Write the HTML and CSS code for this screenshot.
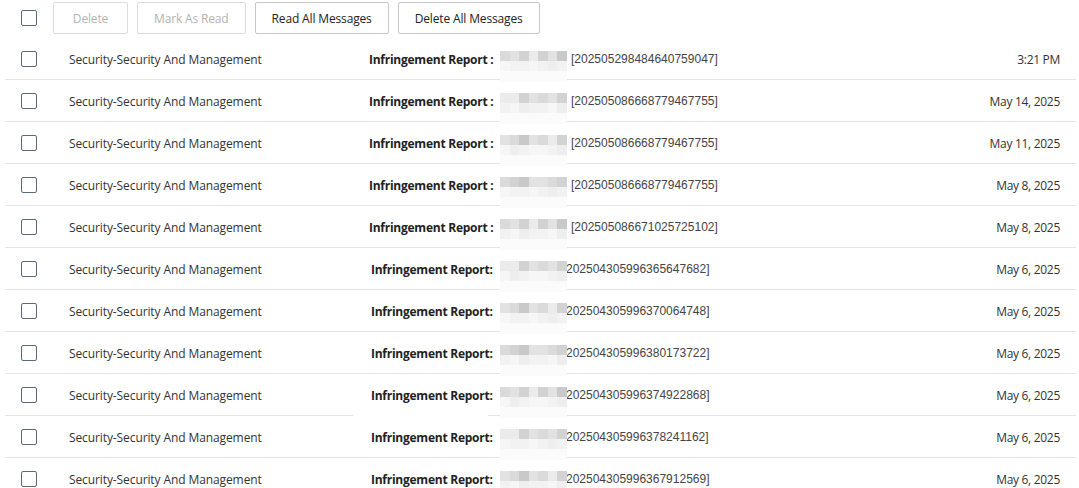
FILE: index.html
```html
<!DOCTYPE html>
<html>
<head>
<meta charset="utf-8">
<link rel="stylesheet" href="styles.css">
</head>
<body>
<div class="page">
  <div class="toolbar">
    <span class="cb"></span>
    <button class="btn disabled">Delete</button>
    <button class="btn disabled">Mark As Read</button>
    <button class="btn">Read All Messages</button>
    <button class="btn">Delete All Messages</button>
  </div>
  <div class="list" id="list"></div>
</div>
<script src="app.js"></script>
</body>
</html>
```
FILE: styles.css
```css
* { box-sizing: border-box; }
body {
  margin: 0;
  background: #fff;
  font-family: "Open Sans", "Noto Sans", sans-serif;
  color: #333;
}
.page { padding: 0 3px 0 5px; }
.toolbar {
  display: flex;
  align-items: center;
  gap: 9px;
  height: 38px;
  padding-left: 16px;
  padding-bottom: 2px;
}
.cb {
  display: inline-block;
  width: 16px;
  height: 16px;
  border: 1.5px solid #5b6b7c;
  border-radius: 2px;
  flex: none;
}
.toolbar .cb { margin-right: 7px; }
.btn {
  height: 32px;
  min-width: 75px;
  padding: 0 16px;
  background: #fff;
  border: 1px solid #c9c9c9;
  border-radius: 2px;
  font-family: inherit;
  font-size: 12px;
  letter-spacing: -0.15px;
  color: #222;
}
.btn.disabled { color: #b3b3b3; border-color: #dcdcdc; }
.row {
  position: relative;
  display: flex;
  align-items: center;
  height: 42px;
  border-bottom: 1px solid #e4e4e4;
  padding: 1px 16px 0 16px;
}
.row .cb { margin-right: 32px; }
.title {
  width: 300px;
  font-size: 12px;
  letter-spacing: -0.1px;
  color: #333;
}
.label {
  width: 131px;
  font-size: 12px;
  font-weight: 700;
  letter-spacing: -0.25px;
  color: #222;
}
.row.alt .label { padding-left: 2px; }
.blur {
  position: relative;
  width: 71px;
  height: 16px;
  flex: none;
}
.pix {
  position: absolute;
  left: 0;
  top: 0;
  width: 67px;
  display: grid;
  grid-template-columns: repeat(7, 1fr);
  grid-template-rows: 10px 10px 11px;
}
.num {
  font-family: "Liberation Sans", Arial, sans-serif;
  font-size: 12px;
  color: #444;
}
.row.alt .blur { width: 66px; }
.date {
  margin-left: auto;
  font-size: 12px;
  letter-spacing: -0.3px;
  color: #333;
}
.mask {
  position: absolute;
  left: 348px;
  bottom: -1px;
  width: 135px;
  height: 2px;
  background: #fff;
}
.g1 { background: #c9c9c9; }
.g2 { background: #d2d2d2; }
.g3 { background: #dadada; }
.g4 { background: #e2e2e2; }
.g5 { background: #ebebeb; }
.l1 { background: #eeeeee; }
.l2 { background: #f2f2f2; }
.l3 { background: #f6f6f6; }
.w1 { background: #fbfbfb; }
```
FILE: app.js
```js
const rows = [
  ["3:21 PM", "[202505298484640759047]", false],
  ["May 14, 2025", "[202505086668779467755]", false],
  ["May 11, 2025", "[202505086668779467755]", false],
  ["May 8, 2025", "[202505086668779467755]", false],
  ["May 8, 2025", "[202505086671025725102]", false],
  ["May 6, 2025", "202504305996365647682]", true],
  ["May 6, 2025", "202504305996370064748]", true],
  ["May 6, 2025", "202504305996380173722]", true],
  ["May 6, 2025", "202504305996374922868]", true],
  ["May 6, 2025", "202504305996378241162]", true],
  ["May 6, 2025", "202504305996367912569]", true]
];
const tops = [
  ["g3","g4","g2","g5","g2","g4","g1"],
  ["g5","g5","g2","g4","g3","g4","g2"],
  ["g4","g3","g1","g4","g3","g5","g2"],
  ["g3","g2","g1","g4","g4","g3","g2"]
];
const mids = [
  ["l3","l2","l2","l3","l2","l1","l2"],
  ["l2","l3","l1","l2","l2","l3","l1"],
  ["l3","l1","l2","l3","l3","l2","l1"]
];
const list = document.getElementById("list");
rows.forEach((r, i) => {
  const row = document.createElement("div");
  row.className = "row" + (r[2] ? " alt" : "");
  const t = tops[i % tops.length], m = mids[i % mids.length];
  let cells = "";
  t.forEach(c => cells += `<i class="${c}"></i>`);
  m.forEach(c => cells += `<i class="${c}"></i>`);
  for (let k = 0; k < 7; k++) cells += `<i class="w1"></i>`;
  row.innerHTML =
    `<span class="cb"></span>` +
    `<span class="title">Security-Security And Management</span>` +
    `<span class="label">${r[2] ? "Infringement Report:" : "Infringement Report :"}</span>` +
    `<span class="blur"><span class="pix">${cells}</span></span>` +
    `<span class="num">${r[1]}</span>` +
    `<span class="date">${r[0]}</span>` +
    (i === 8 ? `<span class="mask"></span>` : "");
  list.appendChild(row);
});
```
